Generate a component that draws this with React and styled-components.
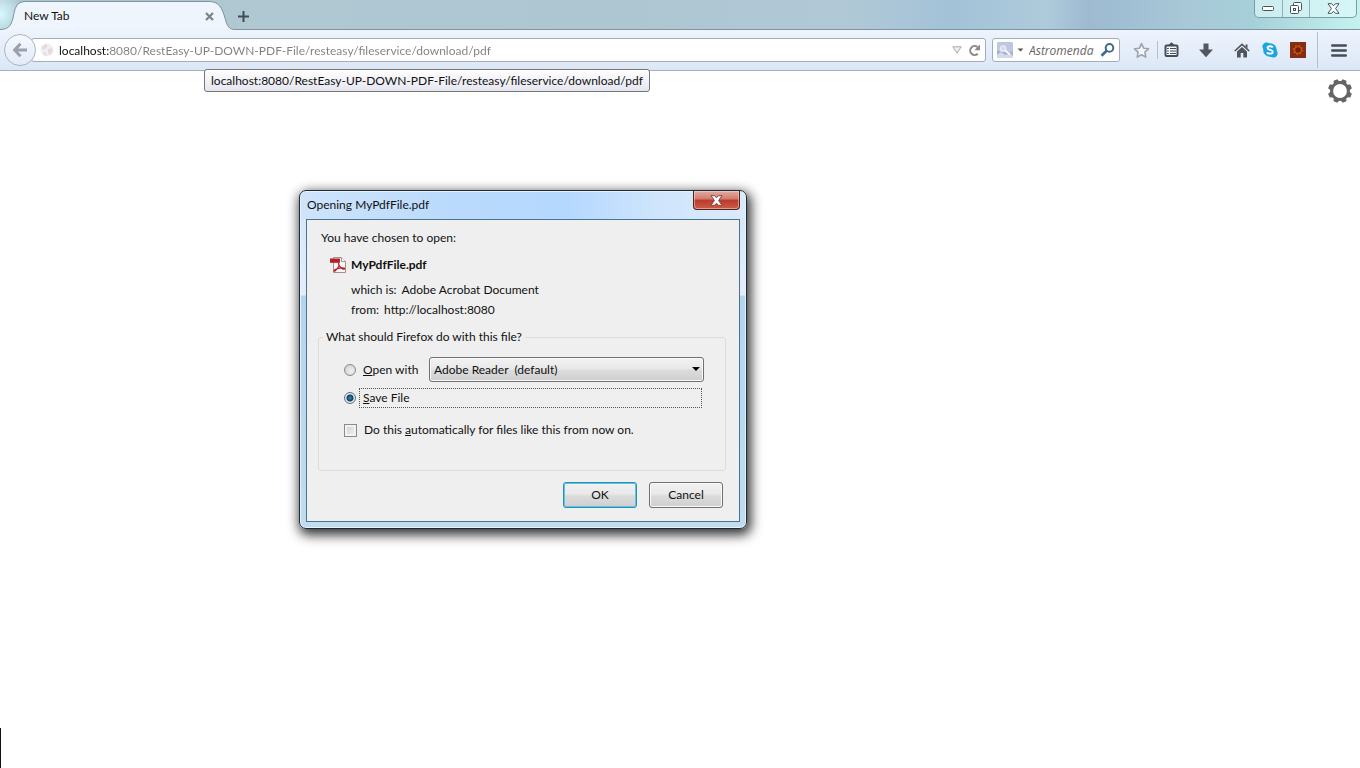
import React, { useState } from 'react';
import styled, { createGlobalStyle } from 'styled-components';

const DOWNLOAD_URL = 'localhost:8080/RestEasy-UP-DOWN-PDF-File/resteasy/fileservice/download/pdf';

const GlobalStyle = createGlobalStyle`
  *, *::before, *::after {
    box-sizing: border-box;
  }

  body {
    margin: 0;
    background: #ffffff;
    color: #111111;
  }

  body, button, input, select {
    font-family: Lato, "Open Sans", sans-serif;
    font-size: 12px;
    line-height: 16px;
  }
`;

const Browser = styled.div`
  position: relative;
  display: flex;
  flex-direction: column;
  min-height: 100vh;
  overflow: hidden;
`;

const TabStrip = styled.div`
  display: flex;
  align-items: flex-start;
  height: 30px;
  border-bottom: 1px solid #7f949d;
  background:
    radial-gradient(circle at 0 14px, #d9fbff 0, rgba(217, 251, 255, 0) 24px),
    linear-gradient(90deg, #a9c5d0 0%, #b0c8d2 20%, #aec6d2 45%, #b1c9d6 62%, #a3c2d8 70%, #aecbdb 77%, #9dbad1 80%, #a9c9d8 88%, #a5d0d8 92%, #c5f2f1 100%);
`;

const Tab = styled.div`
  position: relative;
  display: flex;
  align-items: center;
  flex: none;
  width: 235px;
  height: 30px;
  padding: 2px 18px 0 24px;
`;

const TabShape = styled.svg`
  position: absolute;
  inset: 0;
`;

const TabTitle = styled.span`
  position: relative;
  flex: 1;
`;

const IconButton = styled.button`
  position: relative;
  display: flex;
  align-items: center;
  justify-content: center;
  flex: none;
  width: ${({ $width }) => $width || 16}px;
  height: ${({ $height }) => $height || 24}px;
  padding: 0;
  border: 0;
  background: none;
`;

const NewTabButton = styled(IconButton)`
  margin-top: 4px;
`;

const WindowControls = styled.div`
  display: flex;
  height: 18px;
  margin-left: auto;
  margin-right: 3px;
  border: 1px solid #7d9ca5;
  border-top: 0;
  border-radius: 0 0 5px 5px;
  background: rgba(222, 250, 250, 0.65);
`;

const WindowControl = styled(IconButton)`
  height: 17px;

  & + & {
    border-left: 1px solid #8fb0b8;
  }
`;

const Toolbar = styled.div`
  display: flex;
  align-items: center;
  height: 41px;
  padding: 0 9px 0 4px;
  border-bottom: 1px solid #a3b1c2;
  background: linear-gradient(#eef4fd, #dce7f6);
`;

const BackButton = styled(IconButton)`
  z-index: 1;
  border: 1px solid #a9b5c5;
  border-radius: 50%;
  background: linear-gradient(#f6f9fe, #e3ebf7);
`;

const Field = styled.div`
  display: flex;
  align-items: center;
  height: 24px;
  border: 1px solid #a1adbd;
  border-radius: 3px;
  background: #ffffff;
`;

const AddressBar = styled(Field)`
  flex: 1;
  margin-left: -5px;
  padding: 0 3px 0 8px;
`;

const AddressInput = styled.input`
  flex: 1;
  min-width: 0;
  height: 20px;
  margin-left: 5px;
  padding: 0;
  border: 0;
  outline: 0;
  background: linear-gradient(90deg, #111111 51px, #808080 51px);
  background-clip: text;
  -webkit-text-fill-color: transparent;
`;

const SearchBar = styled(Field)`
  width: 128px;
  margin-left: 6px;
  padding: 0 4px;
`;

const SearchInput = styled.input`
  flex: 1;
  width: 0;
  min-width: 0;
  height: 20px;
  margin-left: 2px;
  padding: 0;
  border: 0;
  outline: 0;
  background: none;

  &::placeholder {
    color: #666666;
    font-family: "Open Sans", sans-serif;
    font-style: italic;
    opacity: 1;
  }
`;

const Tools = styled.div`
  display: flex;
  align-items: center;
  margin-left: 11px;
`;

const Separator = styled.span`
  width: 1px;
  height: ${({ $height }) => $height}px;
  background: #b4bfce;
`;

const UrlTooltip = styled.div`
  position: absolute;
  z-index: 2;
  top: 69px;
  left: 204px;
  padding: 3px 6px 2px;
  border: 1px solid #767676;
  border-radius: 3px;
  background: linear-gradient(#ffffff, #e5e5f0);
  white-space: nowrap;
`;

const Page = styled.main`
  display: flex;
  flex: 1;
  flex-direction: column;
`;

const SettingsButton = styled(IconButton)`
  align-self: flex-end;
  margin: 7px 7px 0 0;
`;

const EdgeMark = styled.span`
  width: 1px;
  height: 40px;
  margin-top: auto;
  background: #111111;
`;

const Dialog = styled.div`
  position: absolute;
  top: 190px;
  left: 299px;
  width: 448px;
  padding: 0 6px 6px;
  border: 1px solid #1d2a36;
  border-radius: 7px;
  background:
    linear-gradient(90deg, #cfe4fb 0, #b9dafc 35%, #b5d8ff 60%, #cfe5fc 80%, #dcebfa 100%) 0 0 / 100% 28px no-repeat,
    linear-gradient(#d3e5f8 0, #e3eefa 104px, #b4d5ee 105px, #bfdcf0 100%);
  box-shadow: inset 0 0 0 1px #e6f3fd, 2px 4px 12px 2px rgba(0, 0, 0, 0.8);
`;

const DialogTitleBar = styled.div`
  display: flex;
  align-items: flex-start;
  justify-content: space-between;
  height: 28px;
`;

const DialogTitle = styled.h1`
  margin: 0;
  padding-top: 6px;
  padding-left: 1px;
  font-size: 12px;
  font-weight: 400;
`;

const DialogClose = styled(IconButton)`
  border: 1px solid #4f2323;
  border-top: 0;
  border-radius: 0 0 4px 4px;
  background: linear-gradient(#e3aba2 0, #d27a6d 45%, #b93a2a 50%, #cc5c48 100%);
  box-shadow: inset 0 0 0 1px rgba(255, 220, 210, 0.5);
`;

const DialogBody = styled.form`
  padding: 10px 13px 13px 11px;
  border: 1px solid #4b7390;
  background: #efefef;
`;

const Prompt = styled.p`
  margin: 0 0 11px 3px;
`;

const FileName = styled.div`
  display: flex;
  align-items: center;
  gap: 5px;
  margin-left: 12px;
  font-weight: 700;
`;

const Details = styled.dl`
  display: flex;
  flex-direction: column;
  gap: 4px;
  margin: 9px 0 11px 33px;
`;

const Detail = styled.div`
  display: flex;
  gap: 5px;

  dd {
    margin: 0;
  }
`;

const Choices = styled.fieldset`
  height: 142px;
  margin: 0;
  padding: 12px 21px 0 25px;
  border: 1px solid #dcdcdc;
  border-radius: 3px;

  legend {
    margin-left: -21px;
    padding: 0 3px;
  }
`;

const Choice = styled.div`
  display: flex;
  align-items: center;
  height: ${({ $height }) => $height || 20}px;
  margin-top: ${({ $gap }) => $gap || 0}px;

  label {
    flex: ${({ $focused }) => ($focused ? 1 : 'none')};
    height: 20px;
    margin-left: 3px;
    padding: 0 3px;
    border: 1px dotted ${({ $focused }) => ($focused ? '#555555' : 'transparent')};
    margin-right: ${({ $focused }) => ($focused ? 2 : 0)}px;
    line-height: 18px;
  }
`;

const Radio = styled.input`
  appearance: none;
  flex: none;
  width: 12px;
  height: 12px;
  margin: 0;
  border: 1px solid #8a8a8a;
  border-radius: 50%;
  background: radial-gradient(circle at 60% 60%, #f2f2f2, #c9c9c9);

  &:checked {
    border-color: #5f7482;
    background: radial-gradient(circle, #2f91b8 0, #123e5c 3px, #dfe9ee 4px);
  }
`;

const Checkbox = styled.input`
  appearance: none;
  flex: none;
  width: 13px;
  height: 13px;
  margin: 0;
  border: 1px solid #8a8a8a;
  background: linear-gradient(135deg, #cccccc, #f6f6f6);
  box-shadow: inset 0 0 0 2px #f2f2f2;
`;

const SelectBox = styled.div`
  position: relative;
  flex: none;
  width: 275px;
  margin-left: auto;

  &::after {
    content: '';
    position: absolute;
    top: 10px;
    right: 4px;
    border: 4px solid transparent;
    border-top-color: #000000;
    border-bottom: 0;
    pointer-events: none;
  }
`;

const Select = styled.select`
  appearance: none;
  display: block;
  width: 100%;
  height: 25px;
  padding: 0 4px;
  border: 1px solid #707070;
  border-radius: 3px;
  background: linear-gradient(#f2f2f2 0, #e9e9e9 45%, #dbdbdb 55%, #cfcfcf 100%);
  box-shadow: inset 0 0 0 1px #fafafa;
  color: #111111;
`;

const Actions = styled.div`
  display: flex;
  justify-content: flex-end;
  gap: 12px;
  margin: 11px 3px 0 0;
`;

const ActionButton = styled.button`
  width: 74px;
  height: 26px;
  padding: 0;
  border: 1px solid ${({ $primary }) => ($primary ? '#2c8fb0' : '#707070')};
  border-radius: 3px;
  background: linear-gradient(#f2f2f2 0, #e9e9e9 45%, #dbdbdb 55%, #cfcfcf 100%);
  box-shadow: inset 0 0 0 1px ${({ $primary }) => ($primary ? '#5cc5e6' : '#fafafa')};
  color: #111111;
`;

function MinimizeIcon() {
  return (
    <svg width="13" height="6" viewBox="0 0 13 6">
      <rect x="0.5" y="0.5" width="11" height="4" rx="1" fill="#fff" stroke="#46545d" />
    </svg>
  );
}

function RestoreIcon() {
  return (
    <svg width="13" height="13" viewBox="0 0 13 13" fill="#fff" stroke="#46545d">
      <rect x="3.5" y="0.5" width="8" height="8" rx="1" />
      <rect x="0.5" y="3.5" width="8" height="8" rx="1" />
      <rect x="3.5" y="6.5" width="2" height="2" />
    </svg>
  );
}

function CrossIcon({ fill = '#fff', stroke = '#46545d' }) {
  return (
    <svg width="13" height="11" viewBox="0 0 13 11">
      <path
        d="M1 .7h3.600l1.900 2.100L8.400.7H12L8.600 5.500 12 10.300H8.400L6.500 8.200 4.600 10.300H1L4.400 5.500Z"
        fill={fill}
        stroke={stroke}
        strokeLinejoin="round"
      />
    </svg>
  );
}

function BackIcon() {
  return (
    <svg width="16" height="16" viewBox="0 0 16 16" fill="none" stroke="#9aa1ac" strokeWidth="3">
      <path d="M8.500 1.800 2.600 8l5.900 6.200M3 8h12" />
    </svg>
  );
}

function GlobeIcon() {
  return (
    <svg width="14" height="14" viewBox="0 0 14 14">
      <circle cx="7" cy="7" r="6.500" fill="#f1eff2" />
      <path d="M2 3.500 6 1l1.500 2.500L5 6 2 7ZM8 6l4-1 1 3-3 4-2-2Z" fill="#e5dadd" />
      <path d="M3 9l3 1 1 3-3-1Z" fill="#e0dde4" />
    </svg>
  );
}

function ReloadIcon() {
  return (
    <svg width="13" height="13" viewBox="0 0 13 13">
      <path d="M9.800 9.800A4.500 4.500 0 1 1 9.500 3" fill="none" stroke="#8a8a8a" strokeWidth="2" />
      <path d="M12 .5v5.700H6.300Z" fill="#8a8a8a" />
    </svg>
  );
}

function EngineIcon() {
  return (
    <svg width="16" height="16" viewBox="0 0 16 16">
      <rect width="16" height="16" rx="1" fill="#bfc8de" />
      <path d="M0 8 4 10l3-1 3 2 6-2v7H0Z" fill="#a9b3cf" />
      <path d="M0 13 4 10l4 3 5-1 3 2v2H0Z" fill="#d3daea" />
      <circle cx="6" cy="6.500" r="2.700" fill="#d4dbe9" stroke="#e9edf5" strokeWidth="1.300" />
      <path d="m8.300 8.300 4.700 4.400" stroke="#fff" strokeWidth="1.800" />
    </svg>
  );
}

function MagnifierIcon() {
  return (
    <svg width="15" height="14" viewBox="0 0 15 14" fill="none" stroke="#3f6a8c">
      <circle cx="9.500" cy="4.900" r="3.800" strokeWidth="2" />
      <path d="M6.600 7.800 1.500 12.700" strokeWidth="2.600" />
    </svg>
  );
}

function StarIcon() {
  return (
    <svg width="17" height="17" viewBox="0 0 17 17">
      <path
        d="m8.500 1.700 2.100 4.500 4.900.6-3.600 3.400.9 4.900-4.300-2.400-4.300 2.400.9-4.900L1.500 6.800l4.900-.6Z"
        fill="#f7f9fd"
        stroke="#9aa3b1"
        strokeWidth="1.600"
        strokeLinejoin="round"
      />
    </svg>
  );
}

function ClipboardIcon() {
  return (
    <svg width="15" height="16" viewBox="0 0 15 16">
      <path d="M3.500 3.500 5.500 2 7.500.3 9.500 2l2 1.500Z" fill="#454d58" />
      <rect x="1.500" y="3.500" width="12" height="10.500" rx="1" fill="#f3f6fb" stroke="#454d58" strokeWidth="2" />
      <path d="M3 6.500h1.800M3 9h1.800M3 11.500h1.800M6 6.500h6M6 9h6M6 11.500h6" stroke="#454d58" strokeWidth="1.200" />
    </svg>
  );
}

function DownloadIcon() {
  return (
    <svg width="14" height="15" viewBox="0 0 14 15">
      <path d="M4.500.5h5v6H14l-7 7.800L0 6.500h4.500Z" fill="#525862" />
    </svg>
  );
}

function HomeIcon() {
  return (
    <svg width="16" height="15" viewBox="0 0 16 15">
      <path d="M.8 8 8 1.300 15.200 8" fill="none" stroke="#50565f" strokeWidth="1.600" />
      <path d="M11.500 1.500h2v4l-2-2Z" fill="#50565f" />
      <path d="m8 4 5 4.600V14.500H9.300V10H6.700v4.500H3V8.600Z" fill="#50565f" />
    </svg>
  );
}

function SkypeIcon() {
  return (
    <svg width="16" height="16" viewBox="0 0 16 16">
      <circle cx="8" cy="8" r="6.800" fill="#1ba5e0" />
      <circle cx="4.600" cy="4.600" r="4.200" fill="#1ba5e0" />
      <circle cx="11.400" cy="11.400" r="4.200" fill="#1ba5e0" />
      <path
        d="M10.700 5.600C10.200 3.800 5.600 3.700 5.500 6c0 2.400 5.200 1.500 5.200 4 0 2.300-5.100 2.200-5.500.2"
        fill="none"
        stroke="#fff"
        strokeWidth="1.800"
      />
    </svg>
  );
}

function AddonIcon() {
  return (
    <svg width="16" height="16" viewBox="0 0 16 16">
      <rect width="16" height="16" fill="#862c12" />
      <circle cx="8" cy="8" r="4.300" fill="none" stroke="#c96416" strokeWidth="1.400" strokeDasharray="1.500 1.877" />
      <circle cx="8" cy="8" r="3.400" fill="#7a1c0c" stroke="#d9701c" strokeWidth="0.800" />
    </svg>
  );
}

function MenuIcon() {
  return (
    <svg width="16" height="13" viewBox="0 0 16 13">
      <path d="M1.200 1.500h13.600M1.200 6.500h13.600M1.200 11.500h13.600" stroke="#454d58" strokeWidth="2.400" strokeLinecap="round" />
    </svg>
  );
}

function GearIcon() {
  const teeth = [0, 45, 90, 135, 180, 225, 270, 315];
  return (
    <svg width="26" height="26" viewBox="0 0 26 26">
      <circle cx="13" cy="13" r="8.400" fill="none" stroke="#666" strokeWidth="3" />
      {teeth.map((angle) => (
        <path key={angle} d="M9.800 4.500 11 1h4l1.200 3.500Z" fill="#666" transform={`rotate(${angle + 22.5} 13 13)`} />
      ))}
    </svg>
  );
}

function PdfIcon() {
  return (
    <svg width="16" height="16" viewBox="0 0 16 16">
      <path d="M3.500.5h8l4 4v11h-12Z" fill="#faf6f6" stroke="#a98c8c" />
      <path d="M11.500.5v4h4" fill="#fff" stroke="#a98c8c" />
      <path d="M0 1.500h10v4.300H0Z" fill="#b3202c" />
      <path
        d="M8.500 6c1 3-1 6-3.500 8-1.300.7-1.200-.6.300-1.500 2.700-1.500 6-2 8.700-1.400 1.200.5.200 1.500-1.200.8C10.500 10.800 8.500 9 8.500 6"
        fill="none"
        stroke="#b3202c"
        strokeWidth="1.300"
      />
    </svg>
  );
}

function Triangle({ width = 7, height = 4, fill = '#555', stroke = 'none' }) {
  return (
    <svg width={width} height={height} viewBox="0 0 10 8" preserveAspectRatio="none">
      <path d="M.8.8h8.400L5 7.200Z" fill={fill} stroke={stroke} />
    </svg>
  );
}

function DownloadDialog() {
  const [action, setAction] = useState('save');

  return (
    <Dialog role="dialog" aria-labelledby="dialog-title">
      <DialogTitleBar>
        <DialogTitle id="dialog-title">Opening MyPdfFile.pdf</DialogTitle>
        <DialogClose type="button" $width={47} $height={19} aria-label="Close dialog">
          <CrossIcon stroke="#7b4a48" />
        </DialogClose>
      </DialogTitleBar>
      <DialogBody onSubmit={(e) => e.preventDefault()}>
        <Prompt>You have chosen to open:</Prompt>
        <FileName>
          <PdfIcon />
          MyPdfFile.pdf
        </FileName>
        <Details>
          <Detail>
            <dt>which is:</dt>
            <dd>Adobe Acrobat Document</dd>
          </Detail>
          <Detail>
            <dt>from:</dt>
            <dd>http://localhost:8080</dd>
          </Detail>
        </Details>
        <Choices>
          <legend>What should Firefox do with this file?</legend>
          <Choice $height={25}>
            <Radio type="radio" name="action" id="open" checked={action === 'open'} onChange={() => setAction('open')} />
            <label htmlFor="open"><u>O</u>pen with</label>
            <SelectBox>
              <Select aria-label="Application" defaultValue="reader">
                <option value="reader">Adobe Reader {'\u00a0'}(default)</option>
              </Select>
            </SelectBox>
          </Choice>
          <Choice $gap={6} $focused={action === 'save'}>
            <Radio type="radio" name="action" id="save" checked={action === 'save'} onChange={() => setAction('save')} />
            <label htmlFor="save"><u>S</u>ave File</label>
          </Choice>
          <Choice $gap={12}>
            <Checkbox type="checkbox" id="always" />
            <label htmlFor="always">Do this <u>a</u>utomatically for files like this from now on.</label>
          </Choice>
        </Choices>
        <Actions>
          <ActionButton type="submit" $primary>OK</ActionButton>
          <ActionButton type="button">Cancel</ActionButton>
        </Actions>
      </DialogBody>
    </Dialog>
  );
}

function App() {
  return (
    <Browser>
      <GlobalStyle />
      <TabStrip>
        <Tab>
          <TabShape width="235" height="30" viewBox="0 0 235 30">
            <path
              d="M0 29.500C8 29.500 11 26 13 18C15 8 16 1.500 26 1.500H209C219 1.500 222 8 225 18C227 26 229 29.500 235 29.500V30H0Z"
              fill="#eff5fd"
            />
            <path
              d="M0 29.500C8 29.500 11 26 13 18C15 8 16 1.500 26 1.500H209C219 1.500 222 8 225 18C227 26 229 29.500 235 29.500"
              fill="none"
              stroke="#7f949d"
            />
          </TabShape>
          <TabTitle>New Tab</TabTitle>
          <IconButton aria-label="Close tab">
            <svg width="9" height="9" viewBox="0 0 9 9" stroke="#7b828c" strokeWidth="2.200">
              <path d="m1 1 7 7M8 1 1 8" />
            </svg>
          </IconButton>
        </Tab>
        <NewTabButton aria-label="New tab">
          <svg width="11" height="11" viewBox="0 0 11 11" stroke="#414c55" strokeWidth="2">
            <path d="M5.500 0v11M0 5.500h11" />
          </svg>
        </NewTabButton>
        <WindowControls>
          <WindowControl $width={27} aria-label="Minimize"><MinimizeIcon /></WindowControl>
          <WindowControl $width={27} aria-label="Restore"><RestoreIcon /></WindowControl>
          <WindowControl $width={47} aria-label="Close window"><CrossIcon /></WindowControl>
        </WindowControls>
      </TabStrip>

      <Toolbar>
        <BackButton $width={32} $height={32} aria-label="Back"><BackIcon /></BackButton>
        <AddressBar>
          <GlobeIcon />
          <AddressInput type="text" aria-label="Address" defaultValue={DOWNLOAD_URL} />
          <IconButton $width={18} $height={20} aria-label="Show history">
            <Triangle width={10} height={8} fill="#eee" stroke="#aaa" />
          </IconButton>
          <IconButton $height={20} aria-label="Reload"><ReloadIcon /></IconButton>
        </AddressBar>
        <SearchBar>
          <EngineIcon />
          <IconButton $width={14} $height={20} aria-label="Choose search engine"><Triangle /></IconButton>
          <SearchInput type="text" aria-label="Search" placeholder="Astromenda" />
          <IconButton $height={20} aria-label="Search"><MagnifierIcon /></IconButton>
        </SearchBar>
        <Tools>
          <IconButton $width={20} aria-label="Bookmark this page"><StarIcon /></IconButton>
          <IconButton $width={12} $height={18} aria-hidden="true" as="span"><Separator $height={18} /></IconButton>
          <IconButton aria-label="Bookmarks"><ClipboardIcon /></IconButton>
          <IconButton $width={54} aria-label="Downloads"><DownloadIcon /></IconButton>
          <IconButton $width={18} aria-label="Home"><HomeIcon /></IconButton>
          <IconButton $width={38} aria-label="Skype"><SkypeIcon /></IconButton>
          <IconButton $width={18} aria-label="Add-on"><AddonIcon /></IconButton>
          <IconButton $width={20} $height={36} aria-hidden="true" as="span"><Separator $height={36} /></IconButton>
          <IconButton $width={24} aria-label="Open menu"><MenuIcon /></IconButton>
        </Tools>
      </Toolbar>

      <Page>
        <SettingsButton $width={26} $height={26} aria-label="Settings"><GearIcon /></SettingsButton>
        <EdgeMark />
      </Page>

      <UrlTooltip role="tooltip">{DOWNLOAD_URL}</UrlTooltip>
      <DownloadDialog />
    </Browser>
  );
}

export default App;
